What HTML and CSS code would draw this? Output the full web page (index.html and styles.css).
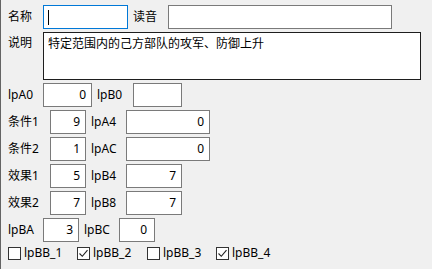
FILE: index.html
```html
<!DOCTYPE html>
<html lang="zh">
<head>
<meta charset="utf-8">
<link rel="stylesheet" href="styles.css">
</head>
<body>
<div class="form">
  <div class="row">
    <span class="lbl w35">名称</span>
    <div class="field focus w85"><span class="caret"></span></div>
    <span class="lbl w40 pl">读音</span>
    <div class="field w224"></div>
  </div>
  <div class="row tall">
    <span class="lbl w35 top">说明</span>
    <div class="field memo w378">特定范围内的己方部队的攻军、防御上升</div>
  </div>
  <div class="row">
    <span class="lbl w35">lpA0</span>
    <div class="field num w49">0</div>
    <span class="lbl w41 pl">lpB0</span>
    <div class="field num w49"></div>
  </div>
  <div class="row">
    <span class="lbl w42">条件1</span>
    <div class="field num w36">9</div>
    <span class="lbl w40 pl">lpA4</span>
    <div class="field num w84">0</div>
  </div>
  <div class="row">
    <span class="lbl w42">条件2</span>
    <div class="field num w36">1</div>
    <span class="lbl w40 pl">lpAC</span>
    <div class="field num w84">0</div>
  </div>
  <div class="row">
    <span class="lbl w42">效果1</span>
    <div class="field num w36">5</div>
    <span class="lbl w40 pl">lpB4</span>
    <div class="field num w56">7</div>
  </div>
  <div class="row">
    <span class="lbl w42">效果2</span>
    <div class="field num w36">7</div>
    <span class="lbl w40 pl">lpB8</span>
    <div class="field num w56">7</div>
  </div>
  <div class="row">
    <span class="lbl w35">lpBA</span>
    <div class="field num w36">3</div>
    <span class="lbl w40 pl">lpBC</span>
    <div class="field num wide-pad w36">0</div>
  </div>
  <div class="checks">
    <label class="chk c69"><span class="box"></span>lpBB_1</label>
    <label class="chk c70"><span class="box"><svg viewBox="0 0 13 13" width="13" height="13"><path d="M2.5 6.5 L5.3 9.3 L10.5 3.2" fill="none" stroke="#222" stroke-width="1.1"/></svg></span>lpBB_2</label>
    <label class="chk c69"><span class="box"></span>lpBB_3</label>
    <label class="chk"><span class="box"><svg viewBox="0 0 13 13" width="13" height="13"><path d="M2.5 6.5 L5.3 9.3 L10.5 3.2" fill="none" stroke="#222" stroke-width="1.1"/></svg></span>lpBB_4</label>
  </div>
</div>
</body>
</html>
```

FILE: styles.css
```css
html, body {
  margin: 0;
  padding: 0;
  background: #f0f0f0;
}
body {
  width: 432px;
  height: 269px;
  overflow: hidden;
  font-family: "Noto Sans", "Noto Sans CJK SC", sans-serif;
  font-size: 12px;
  color: #000;
  border-left: 1px solid #646464;
  box-sizing: border-box;
}
.form {
  padding: 5px 0 0 7px;
}
.row {
  display: flex;
  align-items: center;
  height: 24px;
  margin-bottom: 3px;
}
.row.tall {
  height: 48px;
  align-items: flex-start;
}
.lbl {
  flex: none;
  line-height: 24px;
  white-space: nowrap;
  box-sizing: border-box;
}
.lbl.pl { padding-left: 5px; }
.lbl.top { line-height: 22px; padding-top: 0; }
.w35 { width: 35px; }
.w36 { width: 36px; }
.w40 { width: 40px; }
.w41 { width: 41px; }
.w42 { width: 42px; }
.w49 { width: 49px; }
.w56 { width: 56px; }
.w84 { width: 84px; }
.w85 { width: 85px; }
.w224 { width: 224px; }
.w378 { width: 378px; }
.field {
  flex: none;
  box-sizing: border-box;
  height: 24px;
  background: #fff;
  border: 1px solid #7a7a7a;
  line-height: 22px;
  position: relative;
}
.field.focus {
  border-color: #0078d7;
}
.caret {
  position: absolute;
  left: 4px;
  top: 4px;
  width: 1px;
  height: 15px;
  background: #000;
}
.field.memo {
  height: 48px;
  border-color: #1e1e1e;
  padding: 3px 4px;
  line-height: 15px;
}
.field.num {
  text-align: right;
  padding-right: 5px;
}
.field.num.wide-pad {
  padding-right: 7px;
}
.checks {
  display: flex;
  align-items: center;
  height: 14px;
  margin-top: 4px;
  margin-left: 0;
}
.chk {
  display: flex;
  align-items: center;
  flex: none;
  line-height: 14px;
}
.c69 { width: 69px; }
.c70 { width: 70px; }
.box {
  width: 13px;
  height: 13px;
  box-sizing: border-box;
  border: 1px solid #333;
  background: #fff;
  margin-right: 3px;
  position: relative;
}
.box svg {
  position: absolute;
  left: -1px;
  top: -1px;
}
```
